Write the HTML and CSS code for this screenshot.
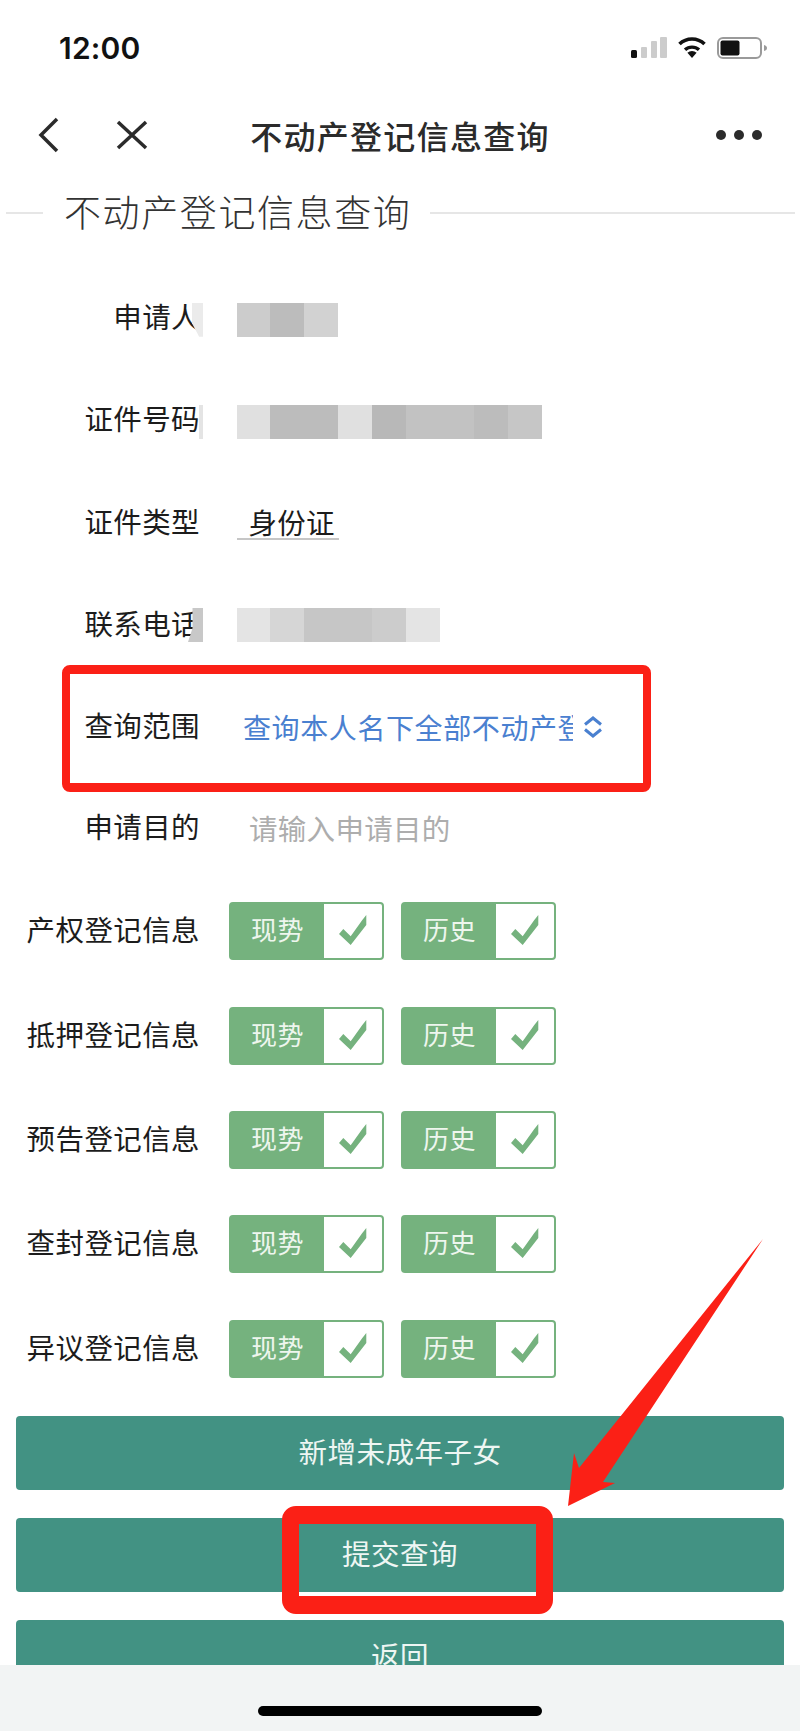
FILE: index.html
```html
<!DOCTYPE html>
<html lang="zh-CN">
<head>
    <meta charset="UTF-8">
    <meta name="viewport" content="width=device-width, initial-scale=1.0">
    <title>不动产登记信息查询</title>
    <link rel="stylesheet" href="styles.css">
</head>
<body>
<div class="phone">
    <div class="status-bar">
        <span class="clock">12:00</span>
        <div class="status-icons">
            <svg class="signal" width="36" height="22" viewBox="0 0 36 22">
                <rect x="0" y="13" width="6" height="8" rx="1.500" fill="#111"/>
                <rect x="10" y="10" width="6" height="11" rx="1" fill="#ccc"/>
                <rect x="20" y="4" width="6" height="17" rx="1" fill="#ccc"/>
                <rect x="29" y="0" width="7" height="21" rx="1" fill="#ccc"/>
            </svg>
            <svg class="wifi" width="30" height="22" viewBox="0 0 30 22">
                <path d="M15 21l-4.600-5.200a6.600 6.600 0 0 1 9.200 0z" fill="#111"/>
                <path d="M8 12.800a10.400 10.400 0 0 1 14 0" fill="none" stroke="#111" stroke-width="3.400"/>
                <path d="M2.500 7a18 18 0 0 1 25 0" fill="none" stroke="#111" stroke-width="3.600"/>
            </svg>
            <svg class="battery" width="50" height="22" viewBox="0 0 50 22">
                <rect x="1" y="1" width="43" height="20" rx="5" fill="none" stroke="#9a9a9a" stroke-width="2"/>
                <rect x="3.500" y="3.500" width="19" height="15" rx="2" fill="#111"/>
                <path d="M47 8c2 .5 3 1.500 3 3s-1 2.500-3 3z" fill="#9a9a9a"/>
            </svg>
        </div>
    </div>

    <div class="nav-bar">
        <div class="nav-left">
            <svg width="22" height="36" viewBox="0 0 22 36">
                <path d="M19 2L3 18l16 16" fill="none" stroke="#2b2b2b" stroke-width="3.500"/>
            </svg>
            <svg width="32" height="30" viewBox="0 0 32 30">
                <path d="M2 2l28 26M30 2L2 28" fill="none" stroke="#2b2b2b" stroke-width="3.500"/>
            </svg>
        </div>
        <div class="nav-title">不动产登记信息查询</div>
        <div class="nav-right">
            <svg width="46" height="12" viewBox="0 0 46 12">
                <circle cx="5" cy="6" r="5" fill="#2b2b2b"/>
                <circle cx="23" cy="6" r="5" fill="#2b2b2b"/>
                <circle cx="41" cy="6" r="5" fill="#2b2b2b"/>
            </svg>
        </div>
    </div>

    <div class="content">
        <div class="legend">
            <span class="legend-text">不动产登记信息查询</span>
        </div>

        <div class="form-row">
            <div class="label label-high">申请人<i class="mask mask-name"></i></div>
            <div class="mosaic">
                <span class="t-cc"></span><span class="t-bb"></span><span class="t-d0"></span>
            </div>
        </div>
        <div class="form-row">
            <div class="label label-high">证件号码<i class="mask mask-id"></i></div>
            <div class="mosaic">
                <span class="t-e0"></span><span class="t-bb"></span><span class="t-bb"></span>
                <span class="t-e0"></span><span class="t-b8"></span><span class="t-c0"></span>
                <span class="t-c0"></span><span class="t-bb"></span><span class="t-c4"></span>
            </div>
        </div>
        <div class="form-row">
            <div class="label">证件类型</div>
            <div class="id-type">身份证</div>
        </div>
        <div class="form-row">
            <div class="label">联系电话<i class="mask mask-phone"></i></div>
            <div class="mosaic">
                <span class="t-e4"></span><span class="t-d4"></span><span class="t-c4"></span>
                <span class="t-c4"></span><span class="t-cc"></span><span class="t-e4"></span>
            </div>
        </div>
        <div class="form-row">
            <div class="label">查询范围</div>
            <div class="select-value">查询本人名下全部不动产登记信息</div>
            <svg class="select-arrows" width="20" height="22" viewBox="0 0 20 22">
                <path d="M2 8.500l8-6.500 8 6.500M2 13.500l8 6.500 8-6.500" fill="none" stroke="#4a80d0" stroke-width="3"/>
            </svg>
        </div>
        <div class="form-row">
            <div class="label">申请目的</div>
            <div class="placeholder">请输入申请目的</div>
        </div>

        <div class="toggle-row">
            <div class="label">产权登记信息</div>
            <div class="toggle"><span class="toggle-text">现势</span><span class="toggle-box"><svg width="28" height="30" viewBox="0 0 28 30"><path d="M0 19l4.300-5 7.400 7.300L23.300 5 27.300 0v10L11.700 30z"/></svg></span></div>
            <div class="toggle"><span class="toggle-text">历史</span><span class="toggle-box"><svg width="28" height="30" viewBox="0 0 28 30"><path d="M0 19l4.300-5 7.400 7.300L23.300 5 27.300 0v10L11.700 30z"/></svg></span></div>
        </div>
        <div class="toggle-row">
            <div class="label">抵押登记信息</div>
            <div class="toggle"><span class="toggle-text">现势</span><span class="toggle-box"><svg width="28" height="30" viewBox="0 0 28 30"><path d="M0 19l4.300-5 7.400 7.300L23.300 5 27.300 0v10L11.700 30z"/></svg></span></div>
            <div class="toggle"><span class="toggle-text">历史</span><span class="toggle-box"><svg width="28" height="30" viewBox="0 0 28 30"><path d="M0 19l4.300-5 7.400 7.300L23.300 5 27.300 0v10L11.700 30z"/></svg></span></div>
        </div>
        <div class="toggle-row">
            <div class="label">预告登记信息</div>
            <div class="toggle"><span class="toggle-text">现势</span><span class="toggle-box"><svg width="28" height="30" viewBox="0 0 28 30"><path d="M0 19l4.300-5 7.400 7.300L23.300 5 27.300 0v10L11.700 30z"/></svg></span></div>
            <div class="toggle"><span class="toggle-text">历史</span><span class="toggle-box"><svg width="28" height="30" viewBox="0 0 28 30"><path d="M0 19l4.300-5 7.400 7.300L23.300 5 27.300 0v10L11.700 30z"/></svg></span></div>
        </div>
        <div class="toggle-row">
            <div class="label">查封登记信息</div>
            <div class="toggle"><span class="toggle-text">现势</span><span class="toggle-box"><svg width="28" height="30" viewBox="0 0 28 30"><path d="M0 19l4.300-5 7.400 7.300L23.300 5 27.300 0v10L11.700 30z"/></svg></span></div>
            <div class="toggle"><span class="toggle-text">历史</span><span class="toggle-box"><svg width="28" height="30" viewBox="0 0 28 30"><path d="M0 19l4.300-5 7.400 7.300L23.300 5 27.300 0v10L11.700 30z"/></svg></span></div>
        </div>
        <div class="toggle-row">
            <div class="label">异议登记信息</div>
            <div class="toggle"><span class="toggle-text">现势</span><span class="toggle-box"><svg width="28" height="30" viewBox="0 0 28 30"><path d="M0 19l4.300-5 7.400 7.300L23.300 5 27.300 0v10L11.700 30z"/></svg></span></div>
            <div class="toggle"><span class="toggle-text">历史</span><span class="toggle-box"><svg width="28" height="30" viewBox="0 0 28 30"><path d="M0 19l4.300-5 7.400 7.300L23.300 5 27.300 0v10L11.700 30z"/></svg></span></div>
        </div>

        <div class="buttons">
            <div class="btn">新增未成年子女</div>
            <div class="btn">提交查询</div>
            <div class="btn">返回</div>
        </div>
    </div>

    <div class="home-bar"><span class="home-pill"></span></div>

    <!-- red annotations drawn on top of the screenshot -->
    <div class="mark mark-scope"></div>
    <div class="mark mark-submit"></div>
    <svg class="mark-arrow" width="800" height="1731" viewBox="0 0 800 1731">
        <path d="M763 1239L603 1482l12 1-47 23 6-53 5 15z" fill="#fb2016"/>
    </svg>
</div>
</body>
</html>
```

FILE: styles.css
```css
/* page frame */
body {
    margin: 0;
    background-color: #fff;
    font-family: "Noto Sans CJK SC", "Liberation Sans", sans-serif;
    color: #1c1c1c;
}

.phone {
    position: relative;
    width: 800px;
    height: 1731px;
    overflow: hidden;
    display: flex;
    flex-direction: column;
}

/* status bar */
.status-bar {
    height: 90px;
    flex: none;
    display: flex;
    justify-content: space-between;
    padding: 36px 33px 0 59px;
    box-sizing: border-box;
}

.clock {
    font-family: Inter, "Liberation Sans", sans-serif;
    font-size: 30px;
    font-weight: 600;
    line-height: 24px;
    letter-spacing: 0.200px;
    color: #111;
}

.status-icons {
    display: flex;
    align-items: flex-start;
    gap: 10px;
    height: 24px;
}

.status-icons svg {
    display: block;
    margin-top: 1px;
}

/* nav bar */
.nav-bar {
    height: 90px;
    flex: none;
    display: grid;
    grid-template-columns: 1fr auto 1fr;
    align-items: center;
    padding: 0 38px;
    box-sizing: border-box;
}

.nav-left {
    display: flex;
    align-items: center;
    gap: 56px;
}

.nav-left svg,
.nav-right svg {
    display: block;
}

.nav-title {
    font-size: 32px;
    font-weight: 500;
    letter-spacing: 1.300px;
    color: #2b2b2b;
}

.nav-right {
    display: flex;
    justify-content: flex-end;
}

/* fieldset style heading */
.content {
    flex: 1;
    overflow: hidden;
    min-height: 0;
}

.legend {
    height: 89px;
    padding: 0 5px 0 6px;
    box-sizing: border-box;
    display: flex;
    align-items: flex-start;
}

.legend::before,
.legend::after {
    content: "";
    height: 2px;
    background-color: #e6e6e6;
    margin-top: 32px;
}

.legend::before {
    width: 37px;
}

.legend::after {
    flex: 1;
}

.legend-text {
    font-size: 37px;
    font-weight: 300;
    letter-spacing: 1.600px;
    line-height: 46px;
    margin: 8px 19px 0 21px;
    color: #333;
    white-space: nowrap;
}

/* form rows */
.form-row {
    height: 101.700px;
    display: flex;
    align-items: center;
}

.label {
    position: relative;
    flex: none;
    width: 200px;
    margin-bottom: 4px;
    text-align: right;
    font-size: 28.500px;
    letter-spacing: 0.400px;
    white-space: nowrap;
    line-height: 34px;
}

.label-high {
    margin-bottom: 7px;
}

.mask {
    position: absolute;
    top: 2px;
    height: 34px;
}

.mask-name {
    top: 3.500px;
    left: 192px;
    width: 11px;
    background-color: #ebebeb;
    clip-path: polygon(0 0, 100% 0, 100% 100%, 65% 100%, 0 60%);
}

.mask-id {
    top: 3.500px;
    left: 199px;
    width: 4px;
    background-color: #e4e4e4;
}

.mask-phone {
    left: 188px;
    width: 15px;
    background-color: #c8c8c8;
    clip-path: polygon(30% 0, 100% 0, 100% 100%, 0 100%, 30% 60%);
}

.mosaic {
    display: flex;
    margin-left: 36.500px;
}

.mosaic span {
    width: 33.900px;
    height: 34px;
}

.t-b8 { background-color: #b8b8b8; }
.t-bb { background-color: #bcbcbc; }
.t-c0 { background-color: #c2c2c2; }
.t-c4 { background-color: #c6c6c6; }
.t-cc { background-color: #cccccc; }
.t-d0 { background-color: #d2d2d2; }
.t-d4 { background-color: #d6d6d6; }
.t-e0 { background-color: #e0e0e0; }
.t-e4 { background-color: #e4e4e4; }

.id-type {
    margin-left: 36.500px;
    width: 102px;
    box-sizing: border-box;
    padding: 0 0 0 12px;
    font-size: 28.500px;
    letter-spacing: 0.200px;
    line-height: 32px;
    border-bottom: 2px solid #c6c6c6;
}

.select-value {
    margin-left: 43px;
    width: 330px;
    overflow: hidden;
    white-space: nowrap;
    font-size: 28px;
    letter-spacing: 0.600px;
    line-height: 34px;
    color: #4a80d0;
}

.select-arrows {
    flex: none;
    margin-left: 10px;
}

.placeholder {
    margin-left: 49px;
    font-size: 28.500px;
    letter-spacing: 0.300px;
    line-height: 34px;
    color: #adadad;
}

/* green toggles */
.toggle-row {
    height: 104.400px;
    display: flex;
    align-items: center;
    gap: 17px;
}

.toggle-row .label {
    margin-right: 12px;
}

.toggle {
    flex: none;
    width: 155px;
    height: 58px;
    box-sizing: border-box;
    display: flex;
    border: 2px solid #75b27e;
    border-radius: 4px;
    background-color: #75b27e;
    overflow: hidden;
}

.toggle-text {
    flex: 1;
    text-align: center;
    color: #eef6ee;
    font-size: 26px;
    letter-spacing: 0.400px;
    line-height: 50px;
}

.toggle-box {
    flex: none;
    width: 58px;
    background-color: #fff;
    display: flex;
    align-items: flex-start;
    justify-content: center;
    padding-top: 11px;
    box-sizing: border-box;
}

.toggle-box svg {
    fill: #75b27e;
}

/* action buttons */
.buttons {
    margin: 15px 16px 0;
    display: flex;
    flex-direction: column;
    gap: 28px;
}

.btn {
    flex: none;
    height: 74px;
    background-color: #429283;
    border-radius: 4px;
    color: #eef6f3;
    text-align: center;
    font-size: 28.500px;
    letter-spacing: 0.500px;
    line-height: 70px;
}

/* bottom indicator */
.home-bar {
    height: 66px;
    flex: none;
    background-color: #f2f4f4;
    display: flex;
    justify-content: center;
    align-items: flex-start;
}

.home-pill {
    width: 284px;
    height: 10px;
    margin-top: 41px;
    border-radius: 5px;
    background-color: #000;
}

/* annotations */
.mark {
    position: absolute;
    box-sizing: border-box;
    border-style: solid;
    border-color: #fb2016;
}

.mark-scope {
    left: 62px;
    top: 665px;
    width: 589px;
    height: 127px;
    border-width: 9px 8px;
    border-radius: 8px;
}

.mark-submit {
    left: 282px;
    top: 1506px;
    width: 271px;
    height: 108px;
    border-width: 18px 17px;
    border-radius: 14px;
}

.mark-arrow {
    position: absolute;
    left: 0;
    top: 0;
}
```
